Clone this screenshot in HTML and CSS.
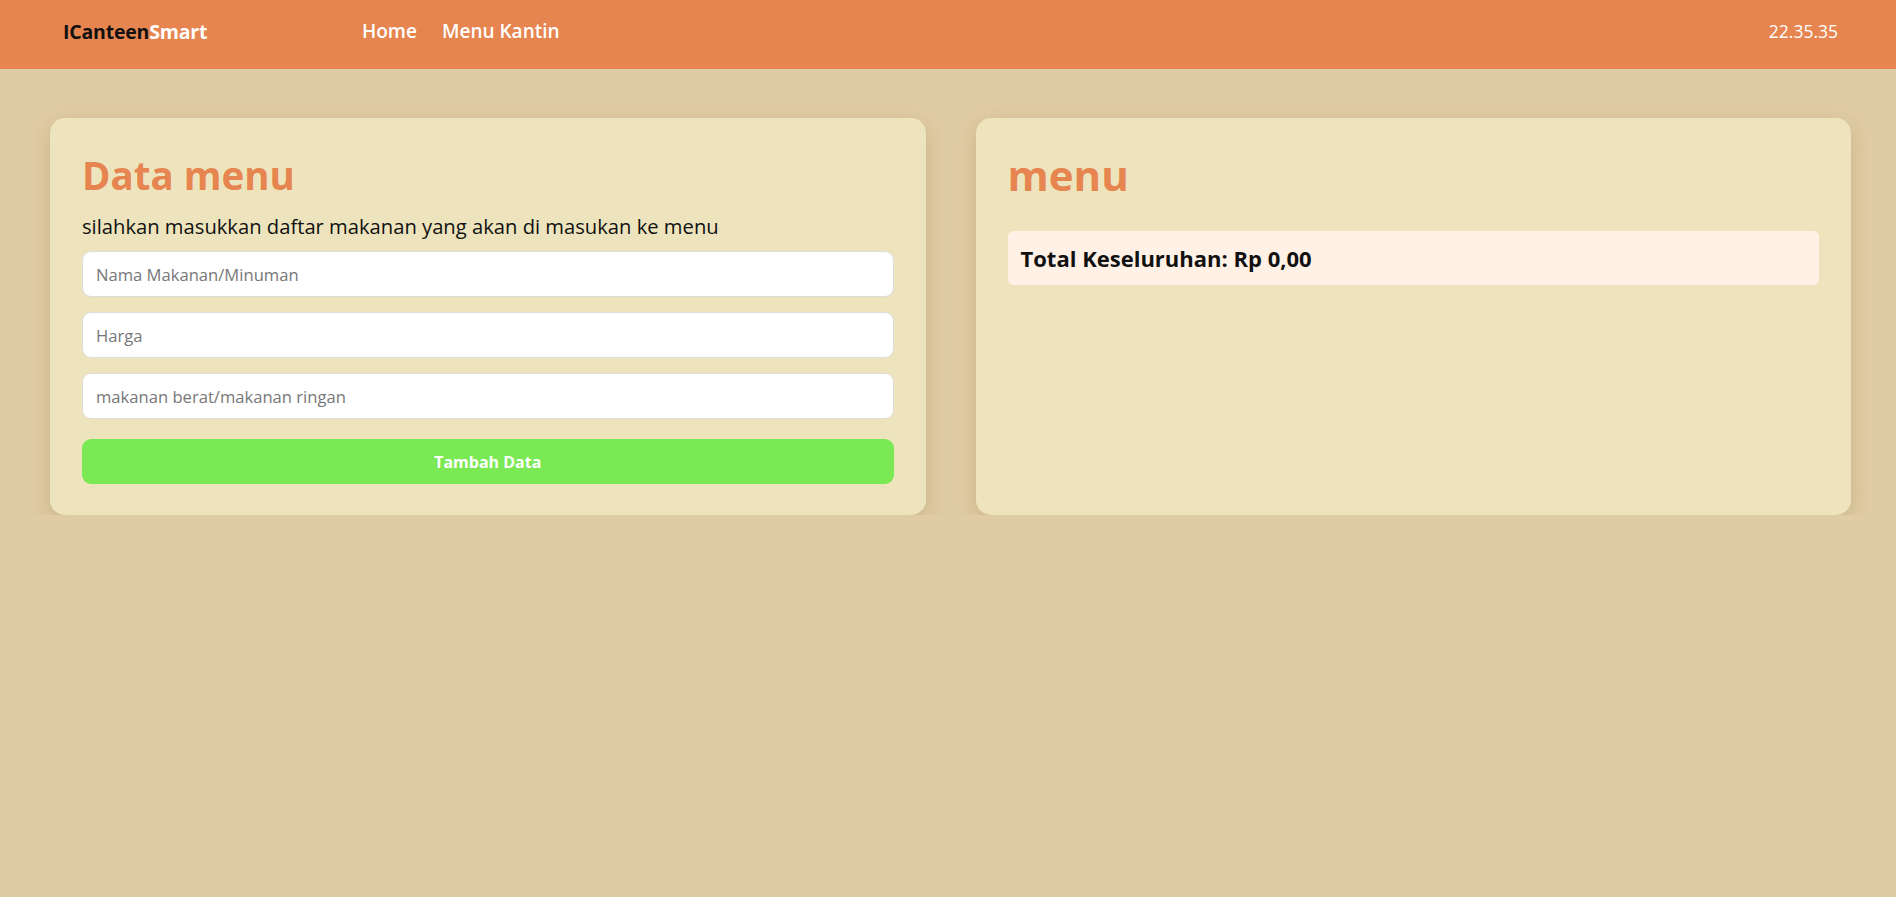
FILE: index.html
```html
<!DOCTYPE html>
<html lang="id">
<head>
<meta charset="utf-8">
<title>ICanteenSmart</title>
<link rel="stylesheet" href="styles.css">
</head>
<body>
<header class="navbar">
  <div class="brand"><span class="brand-dark">ICanteen</span><span class="brand-light">Smart</span></div>
  <nav class="nav-links">
    <a href="#" class="nav-link">Home</a>
    <a href="#" class="nav-link">Menu Kantin</a>
  </nav>
  <div class="clock">22.35.35</div>
</header>

<main class="content">
  <section class="card">
    <h1 class="card-title">Data menu</h1>
    <p class="card-desc">silahkan masukkan daftar makanan yang akan di masukan ke menu</p>
    <form class="menu-form">
      <input class="field" type="text" placeholder="Nama Makanan/Minuman">
      <input class="field" type="text" placeholder="Harga">
      <input class="field" type="text" placeholder="makanan berat/makanan ringan">
      <button class="btn-add" type="button">Tambah Data</button>
    </form>
  </section>

  <section class="card">
    <h1 class="card-title card-title-menu">menu</h1>
    <div class="total-box">Total Keseluruhan: Rp 0,00</div>
  </section>
</main>
</body>
</html>
```

FILE: styles.css
```css
* {
  box-sizing: border-box;
}

body {
  margin: 0;
  background: #e0cca4;
  font-family: "Open Sans", "Noto Sans", sans-serif;
  color: #111;
}

.navbar {
  height: 69px;
  background: #e6854f;
  display: flex;
  align-items: center;
  padding: 0 58px 7px 63px;
}

.brand {
  width: 299px;
  font-size: 19.5px;
  font-weight: 700;
  letter-spacing: -0.2px;
}

.brand-dark {
  color: #111;
}

.brand-light {
  color: #fff;
}

.nav-links {
  display: flex;
  gap: 25px;
  flex: 1;
}

.nav-link {
  color: #fff;
  text-decoration: none;
  font-size: 19px;
  font-weight: 600;
}

.clock {
  color: #fff;
  font-size: 17.5px;
}

.content {
  display: grid;
  grid-template-columns: 1fr 1fr;
  gap: 50px;
  padding: 49px 45px 0 50px;
  align-items: stretch;
}

.card {
  background: #ede4bd;
  border-radius: 15px;
  padding: 32px 32px 31px;
  box-shadow: 0 6px 20px rgba(120, 90, 40, 0.22);
}

.card-title {
  margin: 0 0 14px;
  color: #e6854f;
  font-size: 38.5px;
  font-weight: 700;
  line-height: 50px;
}

.card-title-menu {
  margin-bottom: 31px;
  font-size: 42px;
}

.card-desc {
  margin: 0 0 13px;
  font-size: 20.2px;
  line-height: 24px;
}

.menu-form {
  display: flex;
  flex-direction: column;
  gap: 15px;
}

.field {
  height: 46px;
  border: 1px solid #ddd;
  border-radius: 9px;
  background: #fff;
  padding: 0 13px;
  font-family: inherit;
  font-size: 16.6px;
}

.field::placeholder {
  color: #777;
}

.btn-add {
  margin-top: 5px;
  height: 45px;
  border: none;
  border-radius: 9px;
  background: #7ae953;
  color: #fff;
  font-family: inherit;
  font-size: 16px;
  font-weight: 700;
}

.total-box {
  background: #fff1e6;
  border-radius: 6px;
  height: 54px;
  display: flex;
  align-items: center;
  padding: 0 13px;
  font-size: 22px;
  font-weight: 700;
}
```
